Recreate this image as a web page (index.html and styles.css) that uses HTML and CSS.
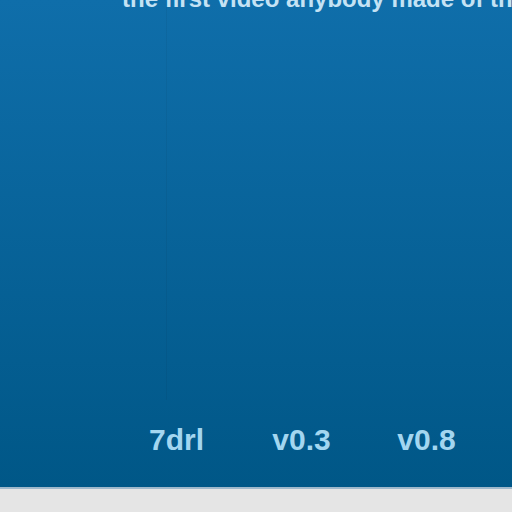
FILE: index.html
```html
<!DOCTYPE html>
<html>
<head>
<meta charset="utf-8">
<link rel="stylesheet" href="styles.css">
</head>
<body>
<div class="panel">
  <p class="caption">the first video anybody made of the game</p>
  <div class="spacer"></div>
  <div class="labels">
    <span class="label">7drl</span>
    <span class="label">v0.3</span>
    <span class="label">v0.8</span>
  </div>
</div>
<div class="divider"></div>
<div class="footer"></div>
</body>
</html>
```
FILE: styles.css
```css
html, body {
  margin: 0;
  padding: 0;
  width: 512px;
  height: 512px;
  overflow: hidden;
  background: #e5e5e5;
  font-family: "Liberation Sans", Arial, sans-serif;
}
.panel {
  height: 487px;
  display: flex;
  flex-direction: column;
  overflow: hidden;
  background:
    linear-gradient(to right, transparent 166px, rgba(0,0,0,0.05) 166px, rgba(0,0,0,0.05) 167px, transparent 167px) 0 0 / 100% 400px no-repeat,
    linear-gradient(to bottom, #0f6eaa 0%, #005787 100%);
}
.caption {
  margin: -13px 0 0 0;
  padding-left: 122px;
  font-size: 24px;
  line-height: 24px;
  font-weight: bold;
  color: #c4e2f4;
  white-space: nowrap;
}
.spacer {
  flex: 1;
}
.labels {
  display: flex;
  padding-left: 114px;
  padding-bottom: 31px;
}
.label {
  width: 125px;
  text-align: center;
  font-size: 30px;
  line-height: 32px;
  font-weight: bold;
  color: #a3d6f0;
}
.divider {
  height: 2px;
  background: #9fb9cc;
}
.footer {
  height: 23px;
  background: #e5e5e5;
}
```
